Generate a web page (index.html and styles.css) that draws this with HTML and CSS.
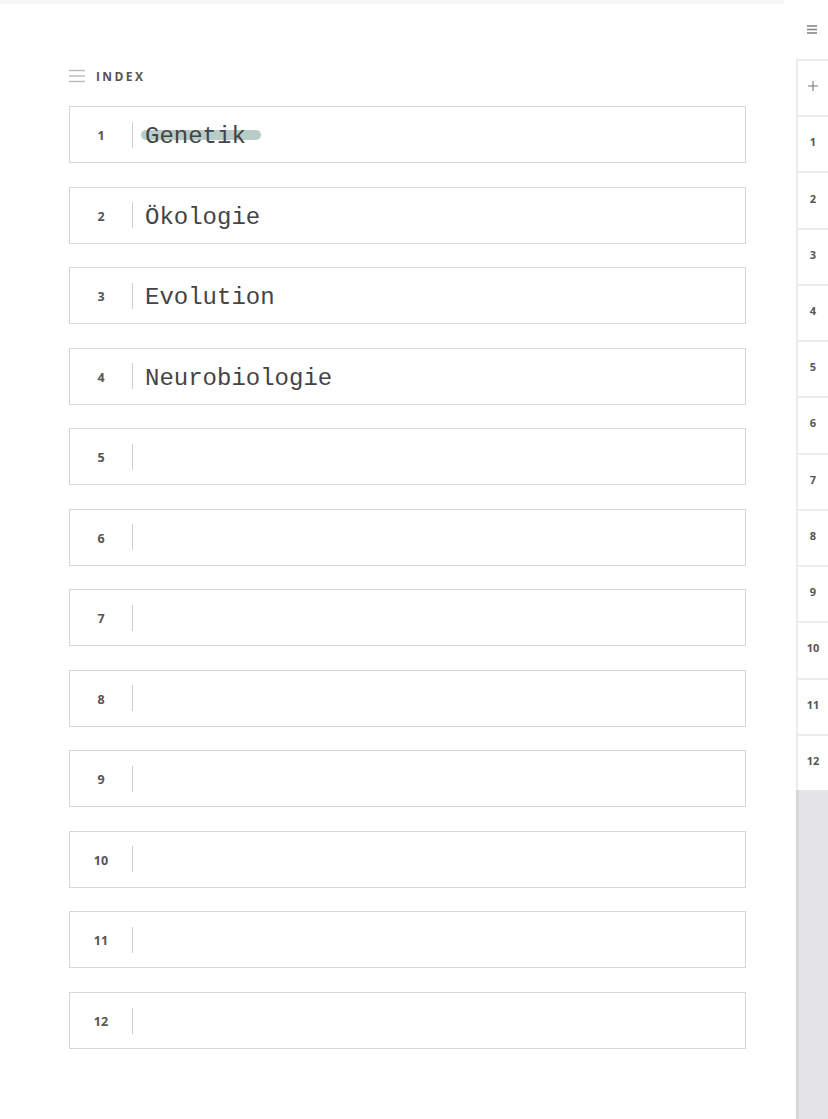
FILE: index.html
```html
<!DOCTYPE html>
<html lang="de">
<head>
<meta charset="utf-8">
<title>Index</title>
<link rel="stylesheet" href="styles.css">
</head>
<body>
<div class="app">
  <main class="main">
    <div class="topbar"></div>
    <section class="content">
      <header class="header">
        <svg class="header-icon" width="16" height="14" viewBox="0 0 16 14"><path d="M0 1.5h16M0 7h16M0 12.5h16" stroke="#bdbdbd" stroke-width="1.4" fill="none"/></svg>
        <span class="header-title">INDEX</span>
      </header>
      <ol class="list">
        <li class="row"><span class="num">1</span><span class="sep"></span><span class="entry"><span class="mark">Genetik</span></span></li>
        <li class="row"><span class="num">2</span><span class="sep"></span><span class="entry">Ökologie</span></li>
        <li class="row"><span class="num">3</span><span class="sep"></span><span class="entry">Evolution</span></li>
        <li class="row"><span class="num">4</span><span class="sep"></span><span class="entry">Neurobiologie</span></li>
        <li class="row"><span class="num">5</span><span class="sep"></span><span class="entry"></span></li>
        <li class="row"><span class="num">6</span><span class="sep"></span><span class="entry"></span></li>
        <li class="row"><span class="num">7</span><span class="sep"></span><span class="entry"></span></li>
        <li class="row"><span class="num">8</span><span class="sep"></span><span class="entry"></span></li>
        <li class="row"><span class="num">9</span><span class="sep"></span><span class="entry"></span></li>
        <li class="row"><span class="num">10</span><span class="sep"></span><span class="entry"></span></li>
        <li class="row"><span class="num">11</span><span class="sep"></span><span class="entry"></span></li>
        <li class="row"><span class="num">12</span><span class="sep"></span><span class="entry"></span></li>
      </ol>
    </section>
  </main>
  <aside class="sidebar">
    <div class="side-top">
      <svg width="10" height="9" viewBox="0 0 10 9"><path d="M0 1h10M0 4.5h10M0 8h10" stroke="#808080" stroke-width="1.3" fill="none"/></svg>
    </div>
    <nav class="tabs">
      <div class="tab tab-plus">
        <svg width="10" height="10" viewBox="0 0 10 10"><path d="M5 0v10M0 5h10" stroke="#777" stroke-width="1.1" fill="none"/></svg>
      </div>
      <div class="tab">1</div>
      <div class="tab">2</div>
      <div class="tab">3</div>
      <div class="tab">4</div>
      <div class="tab">5</div>
      <div class="tab">6</div>
      <div class="tab">7</div>
      <div class="tab">8</div>
      <div class="tab">9</div>
      <div class="tab">10</div>
      <div class="tab">11</div>
      <div class="tab">12</div>
    </nav>
    <div class="side-fill"></div>
  </aside>
</div>
</body>
</html>
```
FILE: styles.css
```css
* { box-sizing: border-box; }
html, body { margin: 0; padding: 0; background: #fff; }
body { font-family: "Open Sans", "Liberation Sans", sans-serif; }

.app {
  display: flex;
  height: 1119px;
  overflow: hidden;
}

.main {
  width: 784px;
  display: flex;
  flex-direction: column;
}

.topbar {
  height: 4px;
  background: #f6f6f6;
}

.content {
  padding: 62px 0 0 69px;
}

.header {
  display: flex;
  align-items: center;
  height: 20px;
  gap: 11px;
  margin-bottom: 20px;
}

.header-icon { display: block; }

.header-title {
  font-size: 12px;
  font-weight: 700;
  letter-spacing: 2.4px;
  color: #555;
}

.list {
  list-style: none;
  margin: 0;
  padding: 0;
  width: 677px;
  display: grid;
  row-gap: 23.55px;
}

.row {
  height: 57px;
  border: 1px solid #d6d6d6;
  display: flex;
  align-items: center;
}

.num {
  width: 62px;
  text-align: center;
  font-size: 12.5px;
  font-weight: 700;
  color: #555;
  padding-top: 2px;
}

.sep {
  width: 1px;
  height: 26px;
  background: #cfcfcf;
}

.entry {
  padding-left: 12px;
  padding-top: 4px;
  font-family: "Liberation Mono", "Courier New", monospace;
  font-size: 24px;
  color: #444;
}

.mark {
  position: relative;
  z-index: 0;
}

.mark::before {
  content: "";
  position: absolute;
  left: -4px;
  right: -15px;
  top: 55%;
  height: 10px;
  margin-top: -8px;
  border-radius: 5px;
  background: #b8ccc8;
  z-index: -1;
}

.sidebar {
  flex: 1;
  display: flex;
  flex-direction: column;
  padding-left: 12px;
}

.side-top {
  height: 59px;
  display: flex;
  align-items: center;
  justify-content: center;
  padding-bottom: 1px;
}

.side-top svg { display: block; }

.tabs {
  display: grid;
  grid-template-rows: repeat(13, 1fr);
  height: 731px;
  border-left: 2px solid #ececec;
}

.tab {
  border-top: 2px solid #ececec;
  display: flex;
  align-items: center;
  justify-content: center;
  padding-bottom: 5px;
  font-size: 11px;
  font-weight: 700;
  color: #555;
  background: #fff;
}

.tab-plus svg { display: block; }

.side-fill {
  flex: 1;
  background: #e5e5e8;
  border-left: 3px solid #d6d6d9;
}
```
